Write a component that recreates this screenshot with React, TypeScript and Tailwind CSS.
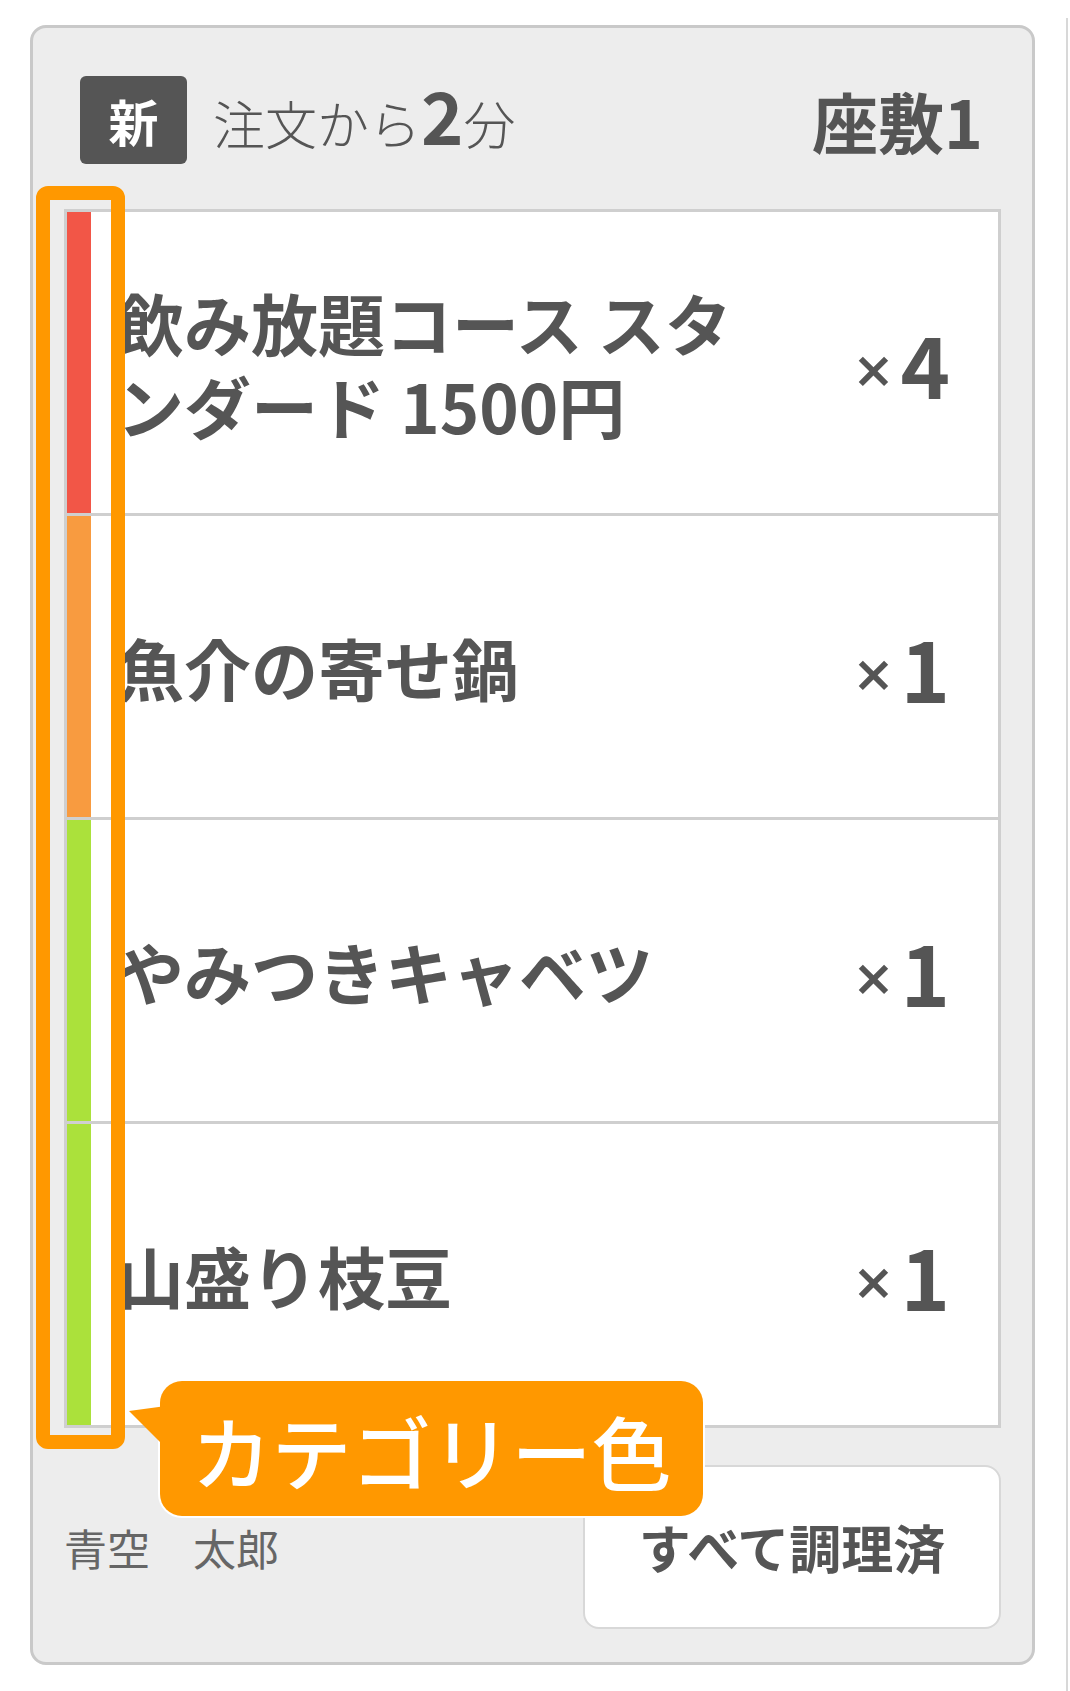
import React from "react";

type Item = { name: string; qty: number; color: string };

const items: Item[] = [
  { name: "飲み放題コース スタンダード 1500円", qty: 4, color: "bg-[#f25647]" },
  { name: "魚介の寄せ鍋", qty: 1, color: "bg-[#f89b40]" },
  { name: "やみつきキャベツ", qty: 1, color: "bg-[#abe13b]" },
  { name: "山盛り枝豆", qty: 1, color: "bg-[#abe13b]" },
];

function OrderRow({ item, first }: { item: Item; first: boolean }) {
  return (
    <div
      className={`flex items-center bg-white ${
        first ? "h-[301px]" : "h-[304px] border-t-[3px] border-[#cfcfcf]"
      }`}
    >
      <div className={`h-full w-[24px] shrink-0 ${item.color}`} />
      <p className="w-[650px] pl-[26px] text-[67px] font-bold leading-[83px] text-[#555]">
        {item.name}
      </p>
      <p className="ml-auto flex items-center pr-[48px] font-bold text-[#555]">
        <span className="mr-[6px] mt-[14px] font-['DejaVu_Sans',sans-serif] text-[50px] leading-none">
          ×
        </span>
        <span className="text-[84px] leading-none">{item.qty}</span>
      </p>
    </div>
  );
}

export default function App() {
  return (
    <div className="relative h-[1691px] w-[1070px] overflow-hidden bg-white font-['Noto_Sans_CJK_JP',sans-serif]">
      <div className="absolute bottom-0 left-[1066px] top-[18px] w-[2px] bg-[#d8d8d8]" />

      <div className="ml-[30px] w-[1005px] translate-y-[25px] rounded-[16px] border-[3px] border-[#c9c9c9] bg-[#ededed] px-[31px] pb-[33px] pt-[48px]">
        {/* header */}
        <div className="flex h-[88px] items-center pl-[16px] pr-[18px]">
          <div className="flex h-[88px] w-[107px] items-center justify-center rounded-[6px] bg-[#555]">
            <span className="text-[50px] font-bold leading-none text-white">新</span>
          </div>
          <p className="ml-[26px] flex items-baseline font-light text-[#555]">
            <span className="text-[52px]">注文から</span>
            <span className="text-[72px] font-bold leading-none">2</span>
            <span className="text-[52px]">分</span>
          </p>
          <p className="ml-auto text-[66px] font-bold leading-none text-[#555]">座敷1</p>
        </div>

        {/* items */}
        <div className="mt-[45px] border-[3px] border-[#cfcfcf] bg-white">
          {items.map((item, i) => (
            <OrderRow key={i} item={item} first={i === 0} />
          ))}
        </div>

        {/* footer */}
        <div className="mt-[37px] flex items-center justify-between">
          <p className="text-[43px] text-[#666]">青空　太郎</p>
          <button className="flex h-[164px] w-[418px] items-center justify-center rounded-[16px] border-2 border-[#d8d8d8] bg-white text-[52px] font-bold text-[#555]">
            すべて調理済
          </button>
        </div>
      </div>

      {/* annotation */}
      <div className="absolute left-[36px] top-[186px] h-[1263px] w-[89px] rounded-[12px] border-[14px] border-[#ff9800]" />
      <div className="absolute left-[160px] top-[1381px] flex h-[135px] w-[543px] items-center justify-center rounded-[22px] bg-[#ff9800] ring-2 ring-white">
        <span className="text-[80px] font-medium leading-none text-white">カテゴリー色</span>
      </div>
      <svg className="absolute left-[126px] top-[1403px]" width="40" height="46" viewBox="0 0 40 46">
        <polygon points="40,3 3,8 40,45" fill="#ff9800" />
      </svg>
    </div>
  );
}
